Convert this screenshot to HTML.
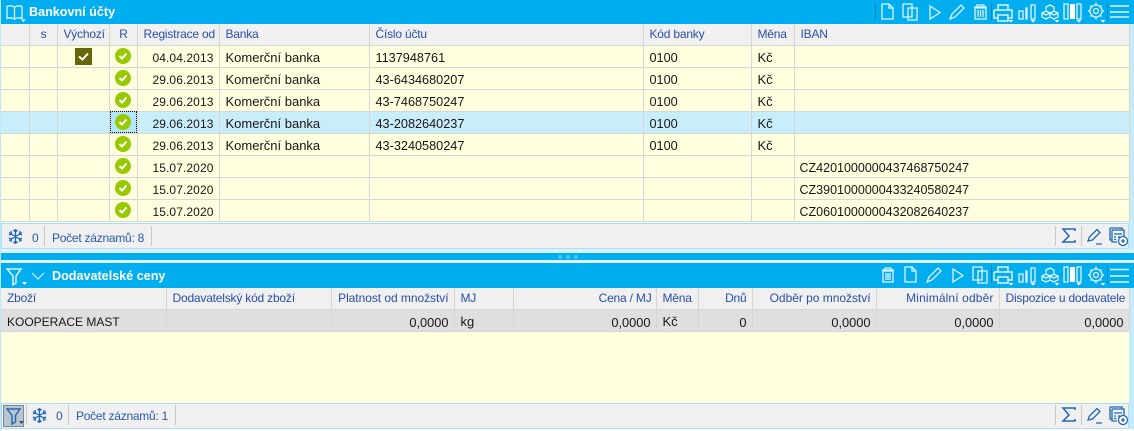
<!DOCTYPE html>
<html><head><meta charset="utf-8"><style>
html,body{margin:0;padding:0;width:1134px;height:431px;overflow:hidden;background:#fff}
body{position:relative;font-family:"Liberation Sans",sans-serif;font-size:13px;color:#1c1414}
.a{position:absolute}
.bar{position:absolute;background:#00adef;left:1px;width:1133px}
.title{position:absolute;color:#fff;font-weight:bold;font-size:12.6px;white-space:nowrap}
table{position:absolute;border-collapse:collapse;table-layout:fixed;left:1px}
td,th{padding:0 5px 0 6px;white-space:nowrap;overflow:hidden;border-right:1.5px solid #d6d6d2;border-bottom:1.5px solid #d6d6d2;font-weight:normal;text-align:left;box-sizing:border-box}
th{height:21px;background:#f0f0f0;color:#2a4fa8;font-size:12px;letter-spacing:-.2px}
td{height:22px;padding-top:2px}
.y td{background:#ffffe0}
.s td{background:#c8edfb}
.g td{background:#dfdfdf}
th.r,td.r{text-align:right}
.c{text-align:center}
td.d{font-size:12px;letter-spacing:.1px;padding-top:4px}
td.n{font-size:12.7px;padding-top:4px}
td.i{font-size:12.5px;padding-top:4px;padding-left:5px}
td.v{font-size:12.8px;padding-top:4px}
td.k{font-size:12px;padding-top:4px}
.foot{position:absolute;left:1px;width:1128px;height:26px;background:#f0f0f0;border:1px solid #a8dff5;box-sizing:border-box}
.ft{position:absolute;color:#2a5aa8;font-size:12px;letter-spacing:-.25px;white-space:nowrap}
.sep{position:absolute;width:1px;background:#c8c8c8}
svg{position:absolute;overflow:visible}
.w{fill:none;stroke:#dff4fd;stroke-width:1.3}
.b{fill:none;stroke:#1f68b4;stroke-width:1.3}
</style></head><body>
<div class="a" style="left:0;top:0;width:1px;height:431px;background:#bfe6f7"></div>
<div class="a" style="left:1129px;top:24px;width:5px;height:225px;background:#c5ecfc"></div>
<div class="a" style="left:1129px;top:288px;width:5px;height:143px;background:#c5ecfc"></div>

<!-- top header -->
<div class="bar" style="top:0;height:24px"></div>
<svg style="left:6px;top:4px" width="18" height="18" class="w"><path d="M1 2.500C3.500 1.500 6 1.500 8.500 3V15C6 13.500 3.500 13.500 1 14.500ZM8.500 3C11 1.500 13.500 1.500 16 2.500V14.500C13.500 13.500 11 13.500 8.500 15"/><path d="M15 15.500h5l-2.500 2.500z" fill="#fff" stroke="none"/></svg>
<div class="title" style="left:29px;top:5px">Bankovní účty</div>

<svg style="left:880px;top:2px" width="254" height="20" class="w">
<path d="M2 2H9L13 6V17H2ZM9 2V6H13"/>
<path d="M23 2H32V15H23ZM28 6H37V18H28Z"/>
<path d="M50 4L60 10.500L50 17Z"/>
<path d="M70 17L72 12L81 3L84 6L75 15Z"/>
<path d="M94 5H107M97 5V3H104V5M95 6H106V17H95ZM98 8V15M100.500 8V15M103 8V15"/>
<path d="M114 8H132V16H128M118 8V3H128V8M118 16H114V8M118 13H128V19H118Z" stroke-width="1.500"/>
<path d="M139 9H143V17H139ZM146 6H147V17H146ZM151 3H155V17H151Z"/>
<path d="M170 3L174 5V9L170 11L166 9V5ZM166 9L170 11V15L166 17L162 15V11ZM174 9L178 11V15L174 17L170 15V11ZM162 11L166 13L170 11M170 11L174 13L178 11"/>
<path d="M184 2H188V17H184ZM197 2H201V17H197Z"/><rect x="190" y="2" width="5" height="15" fill="#fff" stroke="none"/>
<circle cx="216" cy="9" r="6"/><circle cx="216" cy="9" r="2.500"/>
<path d="M216 0.500V3M216 15V17.500M208 9H210M222 9H224M210.500 3.500L212 5M220 13L221.500 14.500M221.500 3.500L220 5M212 13L210.500 14.500"/>
<path d="M230 4H249M230 10H249M230 15H249" stroke-width="1.500"/>
<path d="M128.500 18h5l-2.500 2.500zM150.500 18h5l-2.500 2.500zM174.500 18h5l-2.500 2.500zM196.500 18h5l-2.500 2.500zM220.500 18h5l-2.500 2.500z" fill="#fff" stroke="none"/>
</svg>
<div class="a" style="left:875px;top:3px;width:1px;height:18px;background:#1088c0"></div>
<div class="a" style="left:991px;top:3px;width:1px;height:18px;background:#1088c0"></div>
<div class="a" style="left:1107px;top:3px;width:1px;height:18px;background:#1088c0"></div>

<!-- top grid -->
<table style="top:24px;width:1128px">
<colgroup><col style="width:28px"><col style="width:28px"><col style="width:52px"><col style="width:28px"><col style="width:82px"><col style="width:150px"><col style="width:274px"><col style="width:108px"><col style="width:43px"><col style="width:335px"></colgroup>
<tr><th></th><th class="c">s</th><th class="c">Výchozí</th><th class="c">R</th><th class="r">Registrace od</th><th>Banka</th><th>Číslo účtu</th><th>Kód banky</th><th>Měna</th><th>IBAN</th></tr>
<tr class="y"><td></td><td></td><td></td><td></td><td class="r d">04.04.2013</td><td>Komerční banka</td><td class="n">1137948761</td><td class="n">0100</td><td>Kč</td><td></td></tr>
<tr class="y"><td></td><td></td><td></td><td></td><td class="r d">29.06.2013</td><td>Komerční banka</td><td class="n">43-6434680207</td><td class="n">0100</td><td>Kč</td><td></td></tr>
<tr class="y"><td></td><td></td><td></td><td></td><td class="r d">29.06.2013</td><td>Komerční banka</td><td class="n">43-7468750247</td><td class="n">0100</td><td>Kč</td><td></td></tr>
<tr class="s"><td></td><td></td><td></td><td></td><td class="r d">29.06.2013</td><td>Komerční banka</td><td class="n">43-2082640237</td><td class="n">0100</td><td>Kč</td><td></td></tr>
<tr class="y"><td></td><td></td><td></td><td></td><td class="r d">29.06.2013</td><td>Komerční banka</td><td class="n">43-3240580247</td><td class="n">0100</td><td>Kč</td><td></td></tr>
<tr class="y"><td></td><td></td><td></td><td></td><td class="r d">15.07.2020</td><td></td><td></td><td></td><td></td><td class="i">CZ4201000000437468750247</td></tr>
<tr class="y"><td></td><td></td><td></td><td></td><td class="r d">15.07.2020</td><td></td><td></td><td></td><td></td><td class="i">CZ3901000000433240580247</td></tr>
<tr class="y"><td></td><td></td><td></td><td></td><td class="r d">15.07.2020</td><td></td><td></td><td></td><td></td><td class="i">CZ0601000000432082640237</td></tr>
</table>
<div class="a" style="left:110px;top:111px;width:27px;height:22px;background:#b4e6fa;outline:1px dotted #111;outline-offset:-1px"></div>
<div class="a" style="left:75px;top:48px;width:17px;height:17px;background:#66660a"></div>
<svg style="left:75px;top:48px" width="17" height="17"><path d="M4 8.500L7.500 11.500L13 5.500" fill="none" stroke="#fff" stroke-width="2"/></svg>
<svg style="left:115px;top:48px" width="16" height="16"><circle cx="8" cy="8" r="8" fill="#97c900"/><path d="M4.500 8L7 10.500L11.500 5.500" fill="none" stroke="#fff" stroke-width="2"/></svg>
<svg style="left:115px;top:70px" width="16" height="16"><circle cx="8" cy="8" r="8" fill="#97c900"/><path d="M4.500 8L7 10.500L11.500 5.500" fill="none" stroke="#fff" stroke-width="2"/></svg>
<svg style="left:115px;top:92px" width="16" height="16"><circle cx="8" cy="8" r="8" fill="#97c900"/><path d="M4.500 8L7 10.500L11.500 5.500" fill="none" stroke="#fff" stroke-width="2"/></svg>
<svg style="left:115px;top:114px" width="16" height="16"><circle cx="8" cy="8" r="8" fill="#97c900"/><path d="M4.500 8L7 10.500L11.500 5.500" fill="none" stroke="#fff" stroke-width="2"/></svg>
<svg style="left:115px;top:136px" width="16" height="16"><circle cx="8" cy="8" r="8" fill="#97c900"/><path d="M4.500 8L7 10.500L11.500 5.500" fill="none" stroke="#fff" stroke-width="2"/></svg>
<svg style="left:115px;top:158px" width="16" height="16"><circle cx="8" cy="8" r="8" fill="#97c900"/><path d="M4.500 8L7 10.500L11.500 5.500" fill="none" stroke="#fff" stroke-width="2"/></svg>
<svg style="left:115px;top:180px" width="16" height="16"><circle cx="8" cy="8" r="8" fill="#97c900"/><path d="M4.500 8L7 10.500L11.500 5.500" fill="none" stroke="#fff" stroke-width="2"/></svg>
<svg style="left:115px;top:202px" width="16" height="16"><circle cx="8" cy="8" r="8" fill="#97c900"/><path d="M4.500 8L7 10.500L11.500 5.500" fill="none" stroke="#fff" stroke-width="2"/></svg>

<!-- top footer -->
<div class="foot" style="top:223px"></div>
<svg style="left:8px;top:229px" width="15" height="15" class="b"><path d="M7.500 0V15M1 3.500L14 11.500M14 3.500L1 11.500M5.500 1L7.500 3L9.500 1M5.500 14L7.500 12L9.500 14M1 6L3.500 5L3 2M14 6L11.500 5L12 2M1 9L3.500 10L3 13M14 9L11.500 10L12 13"/></svg>
<div class="ft" style="left:32px;top:231px">0</div>
<div class="sep" style="left:44px;top:226px;height:20px"></div>
<div class="ft" style="left:52px;top:231px">Počet záznamů: 8</div>
<div class="sep" style="left:151px;top:226px;height:20px"></div>
<div class="sep" style="left:1055px;top:226px;height:20px"></div>
<div class="sep" style="left:1081px;top:226px;height:20px"></div>
<svg style="left:1061px;top:228px" width="16" height="16" class="b"><path d="M14 3V1H2L8 8L2 14H14V12" style="stroke-width:1.500"/></svg>
<svg style="left:1087px;top:228px" width="17" height="17" class="b"><path d="M1 13L2.500 9L10 1.500L13 4.500L5.500 12ZM9 16H15"/></svg>
<svg style="left:1109px;top:227px" width="20" height="20" class="b"><path d="M1 1H13V3H15V5M1 1V13H3M3 3H15V14M3 3V15H8M5 7H13M5 10H7M5 12.500H7M9 10H11"/><circle cx="14" cy="14" r="4.500" fill="#fff"/><path d="M12 14H16M14 12V16"/></svg>

<!-- splitter -->
<div class="a" style="left:1px;top:249px;width:1133px;height:4px;background:#d8f1fb"></div>
<div class="bar" style="top:253px;height:7px"></div>
<div class="a" style="left:558px;top:255px;width:4px;height:4px;border-radius:2px;background:#4cc4f2"></div>
<div class="a" style="left:566px;top:255px;width:4px;height:4px;border-radius:2px;background:#4cc4f2"></div>
<div class="a" style="left:574px;top:255px;width:4px;height:4px;border-radius:2px;background:#4cc4f2"></div>
<div class="a" style="left:1px;top:260px;width:1133px;height:3px;background:#e2f5fc"></div>

<!-- second header -->
<div class="bar" style="top:263px;height:25px"></div>
<svg style="left:6px;top:268px" width="20" height="18" class="w"><path d="M1 1H15L10 8V15L7 17V8Z" stroke="#fff"/><path d="M16 14h5l-2.500 3z" fill="#fff" stroke="none"/></svg>
<svg style="left:31px;top:272px" width="14" height="9"><path d="M1 1L7 7L13 1" fill="none" stroke="#dff4fd" stroke-width="1.200"/></svg>
<div class="title" style="left:52px;top:269px">Dodavatelské ceny</div>
<svg style="left:880px;top:265px" width="254" height="20" class="w">
<path d="M2 5H14M5 5V3H11V5M3 6H13V17H3ZM6 8V15M8 8V15M10 8V15"/>
<path d="M25 2H32L36 6V17H25ZM32 2V6H36"/>
<path d="M47 17L49 12L58 3L61 6L52 15Z"/>
<path d="M73 4L83 10.500L73 17Z"/>
<path d="M93 2H102V15H93ZM98 6H107V18H98Z"/>
<path d="M114 7H132V15H128M118 7V2H128V7M118 15H114V7M118 12H128V18H118Z" stroke-width="1.500"/>
<path d="M139 9H143V17H139ZM146 6H147V17H146ZM151 3H155V17H151Z"/>
<path d="M170 3L174 5V9L170 11L166 9V5ZM166 9L170 11V15L166 17L162 15V11ZM174 9L178 11V15L174 17L170 15V11ZM162 11L166 13L170 11M170 11L174 13L178 11"/>
<path d="M184 2H188V17H184ZM197 2H201V17H197Z"/><rect x="190" y="2" width="5" height="15" fill="#fff" stroke="none"/>
<circle cx="216" cy="10" r="6"/><circle cx="216" cy="10" r="2.500"/>
<path d="M216 1.500V4M216 16V18.500M208 10H210M222 10H224M210.500 4.500L212 6M220 14L221.500 15.500M221.500 4.500L220 6M212 14L210.500 15.500"/>
<path d="M230 4.500H249M230 11H249M230 17H249" stroke-width="1.500"/>
<path d="M128.500 18h5l-2.500 2.500zM150.500 18h5l-2.500 2.500zM174.500 18h5l-2.500 2.500zM196.500 18h5l-2.500 2.500zM220.500 18h5l-2.500 2.500z" fill="#fff" stroke="none"/>
</svg>
<div class="a" style="left:991px;top:265px;width:1px;height:18px;background:#1088c0"></div>
<div class="a" style="left:1107px;top:265px;width:1px;height:18px;background:#1088c0"></div>

<!-- second grid -->
<div class="a" style="left:1px;top:288px;width:1128px;height:115px;background:#ffffe0"></div>
<table style="top:288px;width:1128px">
<colgroup><col style="width:165px"><col style="width:165px"><col style="width:123px"><col style="width:59px"><col style="width:143px"><col style="width:42px"><col style="width:54px"><col style="width:124px"><col style="width:123px"><col style="width:130px"></colgroup>
<tr><th>Zboží</th><th>Dodavatelský kód zboží</th><th class="r" style="letter-spacing:-.05px">Platnost od množství</th><th>MJ</th><th class="r" style="padding-right:4px">Cena / MJ</th><th>Měna</th><th class="r">Dnů</th><th class="r" style="letter-spacing:-.03px">Odběr po množství</th><th class="r" style="letter-spacing:.13px">Minimální odběr</th><th class="r" style="padding-right:4px">Dispozice u dodavatele</th></tr>
<tr class="g"><td class="k">KOOPERACE MAST</td><td></td><td class="r v">0,0000</td><td>kg</td><td class="r v">0,0000</td><td>Kč</td><td class="r v">0</td><td class="r v">0,0000</td><td class="r v">0,0000</td><td class="r v">0,0000</td></tr>
</table>

<!-- second footer -->
<div class="foot" style="top:403px"></div>
<div class="a" style="left:3px;top:405px;width:21px;height:22px;background:#b9c6cf;border:1.500px solid #7d8a92;box-sizing:border-box"></div>
<svg style="left:6px;top:408px" width="18" height="17"><path d="M1 1H14L9.500 7.500V14L6 16V7.500Z" fill="none" stroke="#1f68b4" stroke-width="1.400"/><path d="M13 13h5l-2.500 3z" fill="#1f4f90"/></svg>
<svg style="left:32px;top:408px" width="15" height="15" class="b"><path d="M7.500 0V15M1 3.500L14 11.500M14 3.500L1 11.500M5.500 1L7.500 3L9.500 1M5.500 14L7.500 12L9.500 14M1 6L3.500 5L3 2M14 6L11.500 5L12 2M1 9L3.500 10L3 13M14 9L11.500 10L12 13"/></svg>
<div class="ft" style="left:56px;top:409px">0</div>
<div class="sep" style="left:26px;top:405px;height:20px"></div>
<div class="sep" style="left:68px;top:405px;height:20px"></div>
<div class="ft" style="left:76px;top:409px">Počet záznamů: 1</div>
<div class="sep" style="left:175px;top:405px;height:20px"></div>
<div class="sep" style="left:1055px;top:405px;height:20px"></div>
<div class="sep" style="left:1081px;top:405px;height:20px"></div>
<svg style="left:1061px;top:407px" width="16" height="16" class="b"><path d="M14 3V1H2L8 8L2 14H14V12" style="stroke-width:1.500"/></svg>
<svg style="left:1087px;top:407px" width="17" height="17" class="b"><path d="M1 13L2.500 9L10 1.500L13 4.500L5.500 12ZM9 16H15"/></svg>
<svg style="left:1109px;top:406px" width="20" height="20" class="b"><path d="M1 1H13V3H15V5M1 1V13H3M3 3H15V14M3 3V15H8M5 7H13M5 10H7M5 12.500H7M9 10H11"/><circle cx="14" cy="14" r="4.500" fill="#fff"/><path d="M12 14H16M14 12V16"/></svg>
<div class="a" style="left:1px;top:429px;width:1133px;height:2px;background:#fff"></div>
</body></html>
